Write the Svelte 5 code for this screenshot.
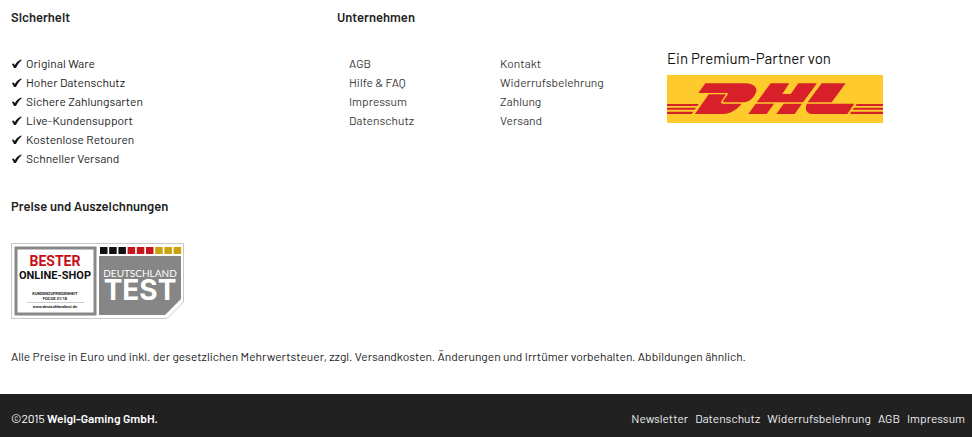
<script>
  const benefits = [
    'Original Ware',
    'Hoher Datenschutz',
    'Sichere Zahlungsarten',
    'Live-Kundensupport',
    'Kostenlose Retouren',
    'Schneller Versand'
  ];

  const companyLinks = [
    ['AGB', 'Hilfe & FAQ', 'Impressum', 'Datenschutz'],
    ['Kontakt', 'Widerrufsbelehrung', 'Zahlung', 'Versand']
  ];

  const legalLinks = ['Newsletter', 'Datenschutz', 'Widerrufsbelehrung', 'AGB', 'Impressum'];

  // German flag colours for the stripe on the award
  const stripe = ['#111', '#111', '#111', '#c4161c', '#c4161c', '#c4161c', '#c9a20c', '#c9a20c', '#c9a20c'];
</script>

<footer>
  <div class="columns">
    <section>
      <h2>Sicherheit</h2>
      <ul class="benefits">
        {#each benefits as benefit}
          <li>
            <svg class="check" viewBox="0 0 11 10" aria-hidden="true">
              <path d="M1 5.2 C1.8 4.2 3 4.4 3.8 6.2 C5.4 3.6 7.2 1.8 9.4 0.8 H11 C8.600 3 6.8 5.4 5.2 8.4 C4.600 9.3 3.2 9.3 2.7 8.4 C2.2 7 1.7 6 1 5.2Z" />
            </svg>
            {benefit}
          </li>
        {/each}
      </ul>
    </section>

    <section>
      <h2>Unternehmen</h2>
      <nav class="company">
        {#each companyLinks as group}
          <ul>
            {#each group as label}
              <li><a href="#top">{label}</a></li>
            {/each}
          </ul>
        {/each}
      </nav>
    </section>

    <section class="partner">
      <p>Ein Premium-Partner von</p>
      <svg class="dhl" viewBox="0 0 648 144" role="img" aria-label="DHL">
        <rect width="648" height="144" fill="#ffcb2c" />
        <g fill="#d8202a">
          <path d="M115 25H236C262 25 275 41 265 57C257 72 245 82 227 82H174C167 82 167 79 170 75L181 60C184 56 183 54 177 54H94Z" />
          <path d="M125 58H177L164 77C160 83 162 86 169 86H224C207 107 188 117 162 117H84Z" />
          <path d="M311 25H367L346 57H371L394 25H450L408 82H269Z" />
          <path d="M266 86H321L299 117H244Z" />
          <path d="M350 86H405L383 117H328Z" />
          <path d="M464 25H536L494 82H422Z" />
          <path d="M420 86H562L541 117H436C420 117 411 103 420 86Z" />
          <path d="M0 87H95L91 93H0ZM0 98H87L83 104H0ZM0 110H79L74 117H0Z" />
          <path d="M569 87H648V93H565ZM561 98H648V104H557ZM553 110H648V117H548Z" />
        </g>
      </svg>
    </section>
  </div>

  <section class="awards">
    <h2>Preise und Auszeichnungen</h2>
    <svg class="award" viewBox="0 0 173 76" role="img" aria-label="Deutschland Test: Bester Online-Shop">
      <path d="M0.5 0.5H172.5V59L156 75.5H0.5Z" fill="#fff" stroke="#c8c8c8" />
      <rect x="5" y="5" width="79" height="66" fill="#fff" stroke="#888" stroke-width="3" />
      <text class="best" x="44" y="23" fill="#c90c16">BESTER</text>
      <text class="shop" x="44" y="36" fill="#111">ONLINE-SHOP</text>
      <text class="small" x="44" y="52" fill="#222">KUNDENZUFRIEDENHEIT</text>
      <text class="small" x="44" y="57" fill="#222">FOCUS 21/18</text>
      <path d="M16 59.500H73" stroke="#ccc" />
      <text class="small" x="44" y="65" fill="#222">www.deutschlandtest.de</text>
      {#each stripe as color, i}
        <rect x={89 + i * 9.2} y="4" width="7.500" height="7" fill={color} />
      {/each}
      <path d="M88 13H170V56L154 72H88Z" fill="#868686" />
      <text class="country" x="129" y="34">DEUTSCHLAND</text>
      <text class="test" x="129" y="57">TEST</text>
    </svg>
  </section>

  <p class="notice">
    Alle Preise in Euro und inkl. der gesetzlichen Mehrwertsteuer, zzgl. Versandkosten. Änderungen und Irrtümer vorbehalten. Abbildungen ähnlich.
  </p>

  <div class="bottom">
    <p>©2015 <strong>Weigl-Gaming GmbH.</strong></p>
    <nav>
      {#each legalLinks as label}
        <a href="#top">{label}</a>
      {/each}
    </nav>
  </div>
</footer>

<style>
  :global(body) {
    background: #fff;
  }

  footer {
    font-family: Barlow, Roboto, sans-serif;
    font-size: 12px;
    line-height: 19px;
    color: #222;
  }

  h2 {
    margin: 0;
    font-size: 13px;
    font-weight: 600;
    line-height: 19px;
    color: #222;
  }

  p {
    margin: 0;
  }

  ul {
    margin: 0;
    padding: 0;
    list-style: none;
  }

  a {
    color: inherit;
    text-decoration: none;
  }

  a:hover {
    text-decoration: underline;
  }

  .columns {
    display: grid;
    grid-template-columns: repeat(3, 1fr);
    gap: 24px;
    padding: 8px 7px 0 11px;
  }

  .columns h2 {
    margin-bottom: 27px;
  }

  .benefits li {
    display: flex;
    align-items: center;
  }

  .check {
    width: 11px;
    height: 10px;
    margin-right: 4px;
    fill: #111;
  }

  .company {
    display: grid;
    grid-template-columns: 1fr 1fr;
    color: #3c3c3c;
  }

  .company ul {
    padding-left: 12px;
  }

  .partner {
    padding: 41px 0 0 4px;
  }

  .partner p {
    margin-bottom: 7px;
    font-size: 15px;
    color: #111;
  }

  .dhl {
    display: block;
    width: 216px;
    height: 48px;
  }

  .awards {
    padding: 29px 11px 0;
  }

  .award {
    display: block;
    width: 173px;
    height: 76px;
    margin-top: 27px;
  }

  .award text {
    font-family: Roboto, sans-serif;
    font-weight: 700;
    text-anchor: middle;
  }

  .award .best {
    font-size: 14px;
  }

  .award .shop {
    font-size: 11px;
  }

  .award .small {
    font-size: 4px;
  }

  .award .country {
    font-family: Lato, sans-serif;
    font-size: 10px;
    font-weight: 400;
    fill: #fff;
  }

  .award .test {
    font-family: Inter, sans-serif;
    font-size: 28px;
    fill: #fff;
  }

  .notice {
    padding: 28px 11px;
  }

  .bottom {
    display: flex;
    justify-content: space-between;
    align-items: center;
    padding: 15px 7px 9px 11px;
    background: #212121;
    color: #fff;
  }

  .bottom strong {
    font-weight: 600;
  }

  .bottom nav {
    display: flex;
    gap: 7px;
    color: #eee;
  }
</style>
